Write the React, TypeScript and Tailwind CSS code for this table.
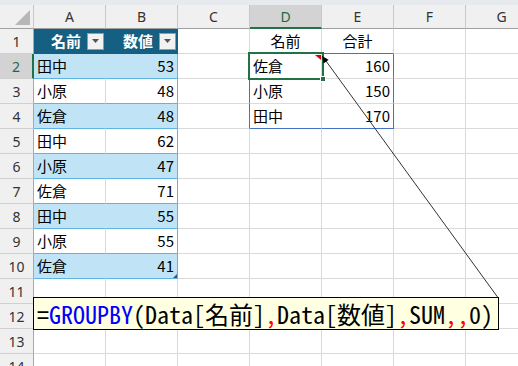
import React from 'react';

const COLS = ['A', 'B', 'C', 'D', 'E', 'F', 'G'];
const ROWS = Array.from({ length: 14 }, (_, i) => i + 1);

const tableData: [string, number][] = [
  ['田中', 53],
  ['小原', 48],
  ['佐倉', 48],
  ['田中', 62],
  ['小原', 47],
  ['佐倉', 71],
  ['田中', 55],
  ['小原', 55],
  ['佐倉', 41],
];

const groupData: [string, number][] = [
  ['佐倉', 160],
  ['小原', 150],
  ['田中', 170],
];

function DropButton() {
  return (
    <div className="ml-[6px] mr-[1px] flex h-[17px] w-[17px] items-center justify-center border border-[#9a9a9a] bg-[#f2f2f2]">
      <svg width="7" height="4" viewBox="0 0 7 4">
        <polygon points="0,0 7,0 3.5,4" fill="#555" />
      </svg>
    </div>
  );
}

function CellBox({ row, col }: { row: number; col: number }) {
  let cls = 'h-[25px] border-r border-b border-[#dadada] bg-white flex items-center px-[3px] text-[15px] text-black';
  let content: React.ReactNode = null;

  // Data table A1:B10
  if (col <= 1 && row <= 10) {
    if (row === 1) {
      cls = 'h-[25px] border-r border-b border-r-[#156082] border-b-[#156082] bg-[#156082] flex items-center justify-end pl-[3px] text-[15px] font-bold text-white';
      content = (
        <>
          <span>{col === 0 ? '名前' : '数値'}</span>
          <DropButton />
        </>
      );
    } else {
      const banded = row % 2 === 0;
      const [name, val] = tableData[row - 2];
      const right = col === 1 ? 'border-r-[#5fb4e0]' : banded ? 'border-r-[#c0e4f5]' : 'border-r-[#dadada]';
      cls = `relative h-[25px] border-r border-b border-b-[#5fb4e0] ${right} ${banded ? 'bg-[#c0e4f5]' : 'bg-white'} flex items-center px-[3px] text-[15px] text-black ${col === 1 ? 'justify-end' : ''}`;
      content = (
        <>
          <span>{col === 0 ? name : val}</span>
          {row === 10 && col === 1 && (
            <svg className="absolute right-0 bottom-0" width="4" height="4" viewBox="0 0 4 4">
              <polygon points="4,0 4,4 0,4" fill="#2f5597" />
            </svg>
          )}
        </>
      );
    }
    return <div className={cls}>{content}</div>;
  }

  // Spill range D1:E4
  if (col === 2 && row >= 2 && row <= 4) {
    return <div className="h-[25px] border-r border-b border-b-[#dadada] border-r-[#4472c4] bg-white" />;
  }
  if ((col === 3 || col === 4) && row <= 4) {
    if (row === 1) {
      return (
        <div className="h-[25px] border-r border-b border-r-[#dadada] border-b-[#4472c4] bg-white flex items-center justify-center text-[15px] text-black">
          {col === 3 ? '名前' : '合計'}
        </div>
      );
    }
    const [name, val] = groupData[row - 2];
    const right = col === 4 ? 'border-r-[#4472c4]' : 'border-r-[#dadada]';
    const bottom = row === 4 ? 'border-b-[#4472c4]' : 'border-b-[#dadada]';
    return (
      <div className={`h-[25px] border-r border-b ${right} ${bottom} bg-white flex items-center px-[3px] text-[15px] text-black ${col === 4 ? 'justify-end' : ''}`}>
        {col === 3 ? name : val}
      </div>
    );
  }

  return <div className={cls}>{content}</div>;
}

export default function App() {
  return (
    <div className="relative h-[366px] w-[518px] overflow-hidden bg-white [font-family:'Noto_Sans_CJK_JP','Noto_Sans',sans-serif]">
      <div className="h-[5px] bg-[#e6e9ed]" />
      <div className="grid grid-cols-[34px_repeat(7,72px)]">
        {/* corner */}
        <div className="relative h-[24px] border-r border-b border-r-[#c8c8c8] border-b-[#a0a0a0] bg-[#f0f0f0]">
          <svg className="absolute left-[15px] top-[5px]" width="15" height="15" viewBox="0 0 15 15">
            <polygon points="15,0 15,15 0,15" fill="#b7b7b7" />
          </svg>
        </div>
        {COLS.map((c) =>
          c === 'D' ? (
            <div key={c} className="flex h-[24px] items-center justify-center border-r border-b-2 border-r-[#c8c8c8] border-b-[#217346] bg-[#d3d3d3] pt-[1px] text-[14px] text-[#1e6b41] [font-family:'Noto_Sans',sans-serif]">
              {c}
            </div>
          ) : (
            <div key={c} className="flex h-[24px] items-center justify-center border-r border-b border-r-[#c8c8c8] border-b-[#a0a0a0] bg-[#f0f0f0] text-[14px] text-[#333] [font-family:'Noto_Sans',sans-serif]">
              {c}
            </div>
          )
        )}

        {ROWS.map((r) => (
          <React.Fragment key={r}>
            {r === 2 ? (
              <div className="flex h-[25px] items-center justify-center border-r-2 border-b border-r-[#217346] border-b-[#d0d0d0] bg-[#d3d3d3] text-[14px] text-[#1e6b41] [font-family:'Noto_Sans',sans-serif]">
                {r}
              </div>
            ) : (
              <div className="flex h-[25px] items-center justify-center border-r border-b border-r-[#a8a8a8] border-b-[#d0d0d0] bg-[#f0f0f0] text-[14px] text-[#333] [font-family:'Noto_Sans',sans-serif]">
                {r}
              </div>
            )}
            {COLS.map((c, ci) => (
              <CellBox key={c} row={r} col={ci} />
            ))}
          </React.Fragment>
        ))}
      </div>

      {/* active cell D2 */}
      <div className="pointer-events-none absolute left-[248px] top-[52px] h-[28px] w-[76px] border-2 border-[#217346]">
        <svg className="absolute right-[1px] top-[1px]" width="6" height="5" viewBox="0 0 6 5">
          <polygon points="0,0 6,0 6,5" fill="#e00000" />
        </svg>
        <div className="absolute -right-[4px] -bottom-[4px] h-[6px] w-[6px] border border-white bg-[#217346]" />
      </div>

      {/* formula callout */}
      <div className="absolute left-[33px] top-[297px] flex h-[33px] w-[466px] items-center border border-black bg-[#ffffe1] pl-[3px] text-[24px] leading-none text-black [font-family:'Noto_Sans_CJK_JP',monospace] [font-feature-settings:'hwid']">
        <span>=</span>
        <span className="text-[#0000ff]">GROUPBY</span>
        <span>(Data[名前]</span>
        <span className="text-[#ff0000]">,</span>
        <span>Data[数値]</span>
        <span className="text-[#ff0000]">,</span>
        <span>SUM</span>
        <span className="text-[#ff0000]">,</span>
        <span className="text-[#ff0000]">,</span>
        <span>0)</span>
      </div>

      {/* connector arrow */}
      <svg className="pointer-events-none absolute left-0 top-0" width="518" height="366" viewBox="0 0 518 366">
        <line x1="497.5" y1="297" x2="326" y2="61" stroke="#333" strokeWidth="1" />
        <polygon points="322,56 328.6,59.8 323.6,63.6" fill="#000" />
      </svg>
    </div>
  );
}
